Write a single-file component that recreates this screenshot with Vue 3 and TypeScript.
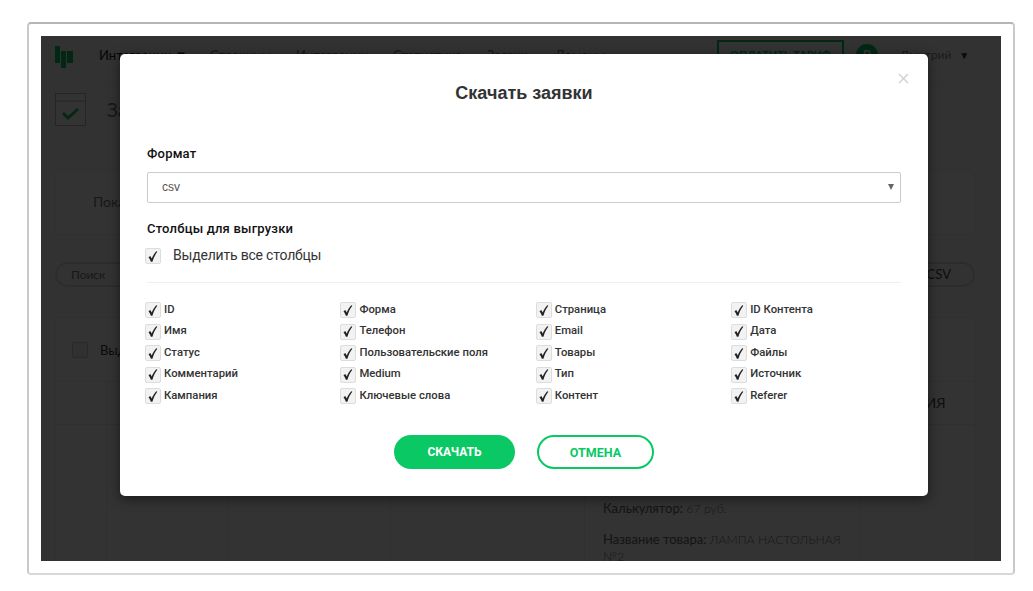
<template>
  <div class="frame">
    <div class="screen">
      <!-- страница под модалкой -->
      <div class="page">
        <header class="nav">
          <svg class="logo" width="18" height="22" viewBox="0 0 18 22">
            <path d="M0 0h5v17H0zM6 5h5v17H6zM12 5h6v12h-6z" fill="#0bc864" />
          </svg>
          <span class="nav-item first">Интеграции ▼</span>
          <span class="nav-item" v-for="item in navItems" :key="item.name" :style="{ width: item.width + 'px' }">{{ item.name }}</span>
          <button class="pay">ОПЛАТИТЬ ТАРИФ</button>
          <span class="avatar">В</span>
          <span class="user">Дмитрий</span>
          <span class="user-arrow">▼</span>
        </header>
        <div class="title-row">
          <svg width="31" height="33" viewBox="0 0 31 33">
            <rect x="0.500" y="0.500" width="30" height="32" fill="#fff" stroke="#bbb" />
            <path d="M1 8h29" stroke="#bbb" />
            <path d="M8 20l5 5 10-9" fill="none" stroke="#0bc864" stroke-width="3" />
          </svg>
          <span class="page-title">Заявки</span>
        </div>
        <section class="card filter">Показать</section>
        <div class="tools">
          <span class="pill search">Поиск</span>
          <span class="pill export">Скачать в .CSV</span>
        </div>
        <section class="card table">
          <div class="select-row">
            <span class="empty-box"></span>
            <span>Выделить все</span>
          </div>
          <div class="table-head">
            <span class="cell c1"></span><span class="cell c2"></span><span class="cell c3"></span>
            <span class="cell c4"></span><span class="cell c5"></span><span class="cell c6">ДЕЙСТВИЯ</span>
          </div>
          <div class="table-row">
            <span class="cell c1"></span><span class="cell c2"></span><span class="cell c3"></span>
            <span class="cell c4"></span>
            <div class="cell c5 details">
              <p>Калькулятор: <em>67 руб.</em></p>
              <p>Название товара: <em>ЛАМПА НАСТОЛЬНАЯ №2</em></p>
            </div>
            <span class="cell c6"></span>
          </div>
        </section>
      </div>

      <div class="overlay">
        <div class="modal">
          <svg class="close" width="11" height="11" viewBox="0 0 11 11">
            <path d="M1 1l9 9M10 1l-9 9" stroke="#d4d4d4" stroke-width="1.600" />
          </svg>
          <h2>Скачать заявки</h2>
          <label class="field-label">Формат</label>
          <div class="select">
            <span>csv</span>
            <i class="arrow"></i>
          </div>
          <label class="field-label columns-label">Столбцы для выгрузки</label>
          <div class="check-all">
            <span class="box">
              <svg width="10" height="11" viewBox="1 0 11 13"><path :d="checkPath" fill="#222" /></svg>
            </span>
            <span class="text">Выделить все столбцы</span>
          </div>
          <hr />
          <div class="columns">
            <div class="col-item" v-for="col in columns" :key="col">
              <span class="box">
                <svg width="10" height="11" viewBox="1 0 11 13"><path :d="checkPath" fill="#222" /></svg>
              </span>
              <span class="text">{{ col }}</span>
            </div>
          </div>
          <div class="actions">
            <button class="btn primary">СКАЧАТЬ</button>
            <button class="btn outline">ОТМЕНА</button>
          </div>
        </div>
      </div>
    </div>
  </div>
</template>

<script setup lang="ts">
const navItems = [
  { name: 'Страницы', width: 86 },
  { name: 'Интеграции', width: 97 },
  { name: 'Статистика', width: 94 },
  { name: 'Заявки', width: 68 },
  { name: 'Домены', width: 163 }
]

// порядок как на макете: слева направо по строкам
const columns: string[] = [
  'ID', 'Форма', 'Страница', 'ID Контента',
  'Имя', 'Телефон', 'Email', 'Дата',
  'Статус', 'Пользовательские поля', 'Товары', 'Файлы',
  'Комментарий', 'Medium', 'Тип', 'Источник',
  'Кампания', 'Ключевые слова', 'Контент', 'Referer'
]

const checkPath = 'M1.200 7.300 L3.300 6 L5 9 C6.300 5.800 8 2.800 10.300 0.300 L11.600 1 C9 4.400 7.100 8.200 5.800 12.800 L4 12.800 C3.200 10.500 2.300 8.800 1.200 7.300 Z'
</script>

<style scoped>
.frame {
  box-sizing: border-box;
  width: 988px;
  height: 553px;
  margin: 22px 0 0 27px;
  padding: 12px;
  background: #fff;
  border: 2px solid #c9c9c9;
  border-top-color: #b5b5b5;
  border-bottom-color: #d8d8d8;
  border-radius: 4px;
}

.screen {
  position: relative;
  width: 960px;
  height: 525px;
  overflow: hidden;
  background: #fff;
}

.page {
  padding: 0 14px;
  height: 100%;
  box-sizing: border-box;
  background: #fafafa;
  font-family: Lato, sans-serif;
  font-size: 13px;
  color: #777;
}

.nav {
  box-sizing: border-box;
  display: flex;
  align-items: center;
  height: 47px;
  padding-bottom: 9px;
  border-bottom: 1px solid #eee;
}

.logo {
  margin: 4px 26px 0 0;
}

.nav-item {
  flex: none;
  white-space: nowrap;
  color: #777;
}

.nav-item.first {
  width: 111px;
  color: #222;
}

.pay {
  flex: none;
  width: 127px;
  height: 29px;
  margin-left: -1px;
  padding: 0;
  background: #fff;
  border: 2px solid #0bc864;
  color: #0bc864;
  font: 700 11px Lato, sans-serif;
}

.avatar {
  width: 22px;
  height: 22px;
  margin: 0 22px 0 12px;
  border-radius: 50%;
  background: #0bc864;
  color: #fff;
  text-align: center;
  line-height: 22px;
  font-weight: 700;
}

.user {
  font-size: 12px;
  color: #888;
}

.user-arrow {
  margin-left: 8px;
  font-size: 10px;
  color: #333;
}

.title-row {
  display: flex;
  align-items: center;
  gap: 21px;
  height: 53px;
  font-size: 19px;
}

.card {
  background: #fff;
  border: 1px solid #eee;
  border-radius: 3px;
}

.filter {
  height: 62px;
  margin: 35px 12px 0 0;
  padding-left: 37px;
  line-height: 60px;
  font-size: 14px;
}

.tools {
  display: flex;
  justify-content: space-between;
  margin: 27px 12px 0 0;
}

.pill {
  box-sizing: border-box;
  height: 25px;
  border: 2px solid #ddd;
  border-radius: 13px;
  padding: 0 14px;
  line-height: 21px;
  font-size: 12px;
  color: #777;
}

.search {
  width: 210px;
}

.export {
  padding-right: 22px;
  font-size: 13px;
  color: #444;
}

.table {
  margin: 30px 12px 0 0;
  height: 300px;
}

.select-row {
  display: flex;
  align-items: center;
  gap: 12px;
  height: 63px;
  padding-left: 16px;
  border-bottom: 1px solid #eee;
  color: #333;
}

.empty-box {
  box-sizing: border-box;
  width: 16px;
  height: 16px;
  border: 1px solid #ccc;
  border-radius: 2px;
  background: #f3f3f3;
}

.table-head,
.table-row {
  display: flex;
}

.table-head {
  height: 42px;
  border-bottom: 1px solid #eee;
}

.table-row {
  height: 190px;
}

.cell {
  box-sizing: border-box;
  border-right: 1px solid #eee;
}

.c1 { width: 51px; }
.c2 { width: 121px; }
.c3 { width: 163px; }
.c4 { width: 194px; }
.c5 { width: 276px; padding: 0 18px; }
.c6 {
  flex: 1;
  padding-left: 8px;
  border-right: 0;
  line-height: 42px;
  font-size: 14px;
  white-space: nowrap;
  color: #444;
}

.details {
  padding-top: 75px;
  line-height: 17px;
  font-size: 13px;
  color: #666;
}

.details p {
  margin: 0 0 14px;
}

.details em {
  font-style: normal;
  font-size: 12.300px;
  font-weight: 300;
  color: #777;
}

.overlay {
  position: absolute;
  inset: 0;
  padding: 18px 0 0 79px;
  background: rgba(0, 0, 0, 0.8);
}

.modal {
  position: relative;
  box-sizing: border-box;
  width: 808px;
  height: 442px;
  padding: 29px 27px 0;
  background: #fff;
  border-radius: 5px;
  box-shadow: 0 3px 12px rgba(0, 0, 0, 0.5);
  font-family: "Liberation Sans", Arial, sans-serif;
  color: #222;
}

.close {
  position: absolute;
  top: 19px;
  right: 19px;
}

h2 {
  margin: 0 0 44px;
  text-align: center;
  font-size: 18px;
  line-height: 20px;
  font-weight: 700;
  color: #333;
}

.field-label {
  display: block;
  font: 500 13px/14px Roboto, sans-serif;
  letter-spacing: 0.2px;
  color: #111;
}

.select {
  position: relative;
  box-sizing: border-box;
  height: 31px;
  margin-top: 11px;
  padding-left: 14px;
  border: 1px solid #ccc;
  border-radius: 2px;
  line-height: 29px;
  font-size: 12px;
  color: #555;
}

.arrow {
  position: absolute;
  top: 11px;
  right: 6px;
  border: 3px solid transparent;
  border-top: 6px solid #666;
}

.columns-label {
  margin-top: 19px;
}

.box {
  flex: none;
  display: flex;
  align-items: center;
  justify-content: center;
  box-sizing: border-box;
  width: 16px;
  height: 16px;
  background: #f2f2f2;
  border: 1px solid #ddd;
  border-radius: 2px;
}

.check-all {
  display: flex;
  align-items: center;
  gap: 12px;
  height: 16px;
  margin: 12px 0 0 -2px;
  font: 400 14px Roboto, sans-serif;
  letter-spacing: -0.2px;
  color: #333;
}

.text {
  margin-top: -2px;
}

hr {
  height: 1px;
  margin: 18px 0 19px;
  border: 0;
  background: #eee;
}

.columns {
  display: grid;
  grid-template-columns: repeat(4, 195.400px);
  grid-auto-rows: 16px;
  row-gap: 5.500px;
  margin-left: -2px;
}

.col-item {
  display: flex;
  align-items: center;
  gap: 3px;
  white-space: nowrap;
  font: 500 11.300px Roboto, sans-serif;
  color: #333;
}

.actions {
  display: flex;
  gap: 22px;
  margin: 31px 0 0 247px;
}

.btn {
  box-sizing: border-box;
  height: 34px;
  border-radius: 17px;
  font: 700 12px Roboto, sans-serif;
  padding: 0;
}

.primary {
  width: 121px;
  background: #0ac864;
  border: 0;
  color: #fff;
}

.outline {
  width: 117px;
  background: #fff;
  border: 2px solid #0ac864;
  color: #0ac864;
  font-size: 12.500px;
}
</style>
